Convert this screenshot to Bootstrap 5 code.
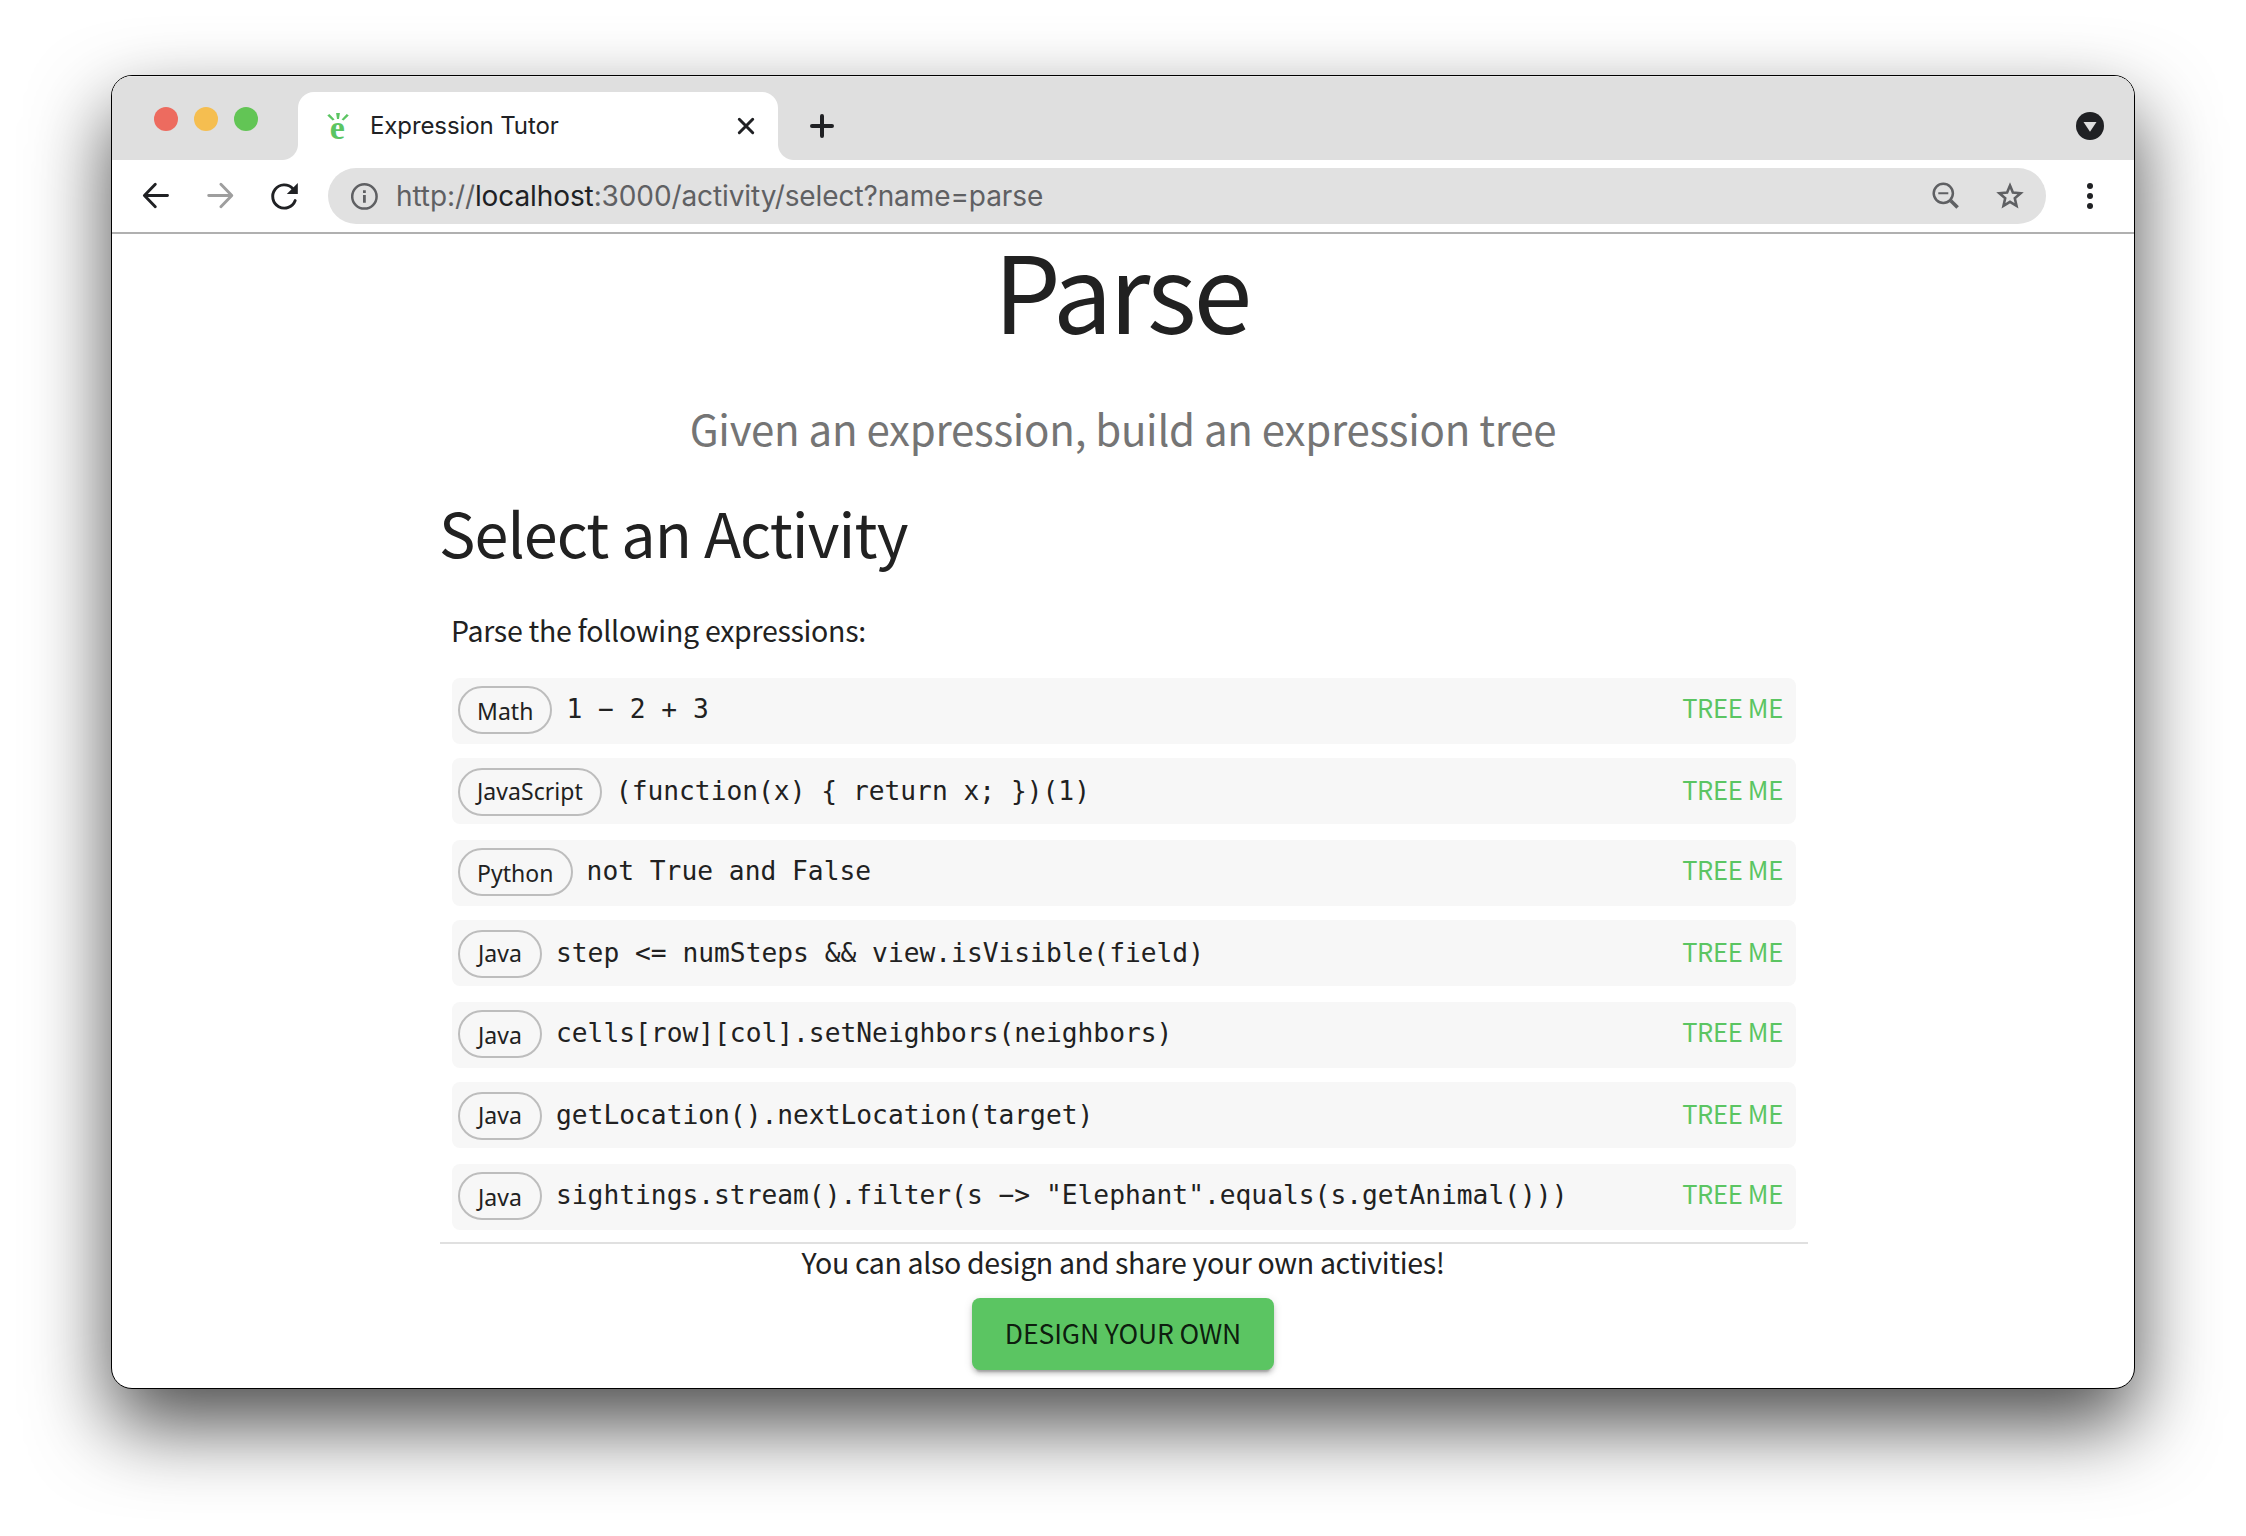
<!DOCTYPE html>
<html lang="en">
<head>
<meta charset="utf-8">
<meta name="viewport" content="width=device-width, initial-scale=1">
<title>Expression Tutor</title>
<link href="https://cdn.jsdelivr.net/npm/bootstrap@5.3.0/dist/css/bootstrap.min.css" rel="stylesheet">
<style>
  body { background: #fff; color: #212121; font-family: "Noto Sans CJK SC", "Noto Sans", sans-serif; height: 1536px; padding: 75px 0 0 111px; }
  .window { width: 2024px; height: 1314px; border: 1px solid #000; border-radius: 21px; background: #fff; box-shadow: 0 36px 80px rgba(0,0,0,.7); }
  .chrome { font-family: Inter, Roboto, sans-serif; color: #202124; }
  .chrome svg, .tab svg { display: block; flex: none; }

  /* tab strip */
  .tabstrip { height: 84px; background: #dfdfdf; padding-left: 42px; padding-right: 30px; box-shadow: inset 0 1px 0 #e9e9e9; }
  .lights { gap: 16px; width: 144px; padding-top: 31px; }
  .light { width: 24px; height: 24px; border-radius: 50%; }
  .light-close { background: #ed6b5f; }
  .light-min { background: #f5be50; }
  .light-max { background: #62c555; }
  .tab { width: 480px; height: 68px; margin-top: 16px; background: #fff; border-radius: 16px 16px 0 0; position: relative; padding: 0 22px 0 28px; }
  .tab::before, .tab::after { content: ""; position: absolute; bottom: 0; width: 16px; height: 16px; }
  .tab::before { left: -16px; background: radial-gradient(circle at 0 0, transparent 15.5px, #fff 16.5px); }
  .tab::after { right: -16px; background: radial-gradient(circle at 100% 0, transparent 15.5px, #fff 16.5px); }
  .tab-title { font-size: 24px; line-height: 32px; letter-spacing: -.1px; margin-left: 15px; }
  .favicon-e { font: bold 34px "Liberation Serif", serif; fill: #5bc562; }
  .newtab { margin: 16px 0 0 30px; height: 68px; }
  .tabsearch { margin-top: 16px; height: 68px; }

  /* toolbar */
  .toolbar { height: 74px; border-bottom: 2px solid #b0b0b0; padding-left: 28px; padding-right: 28px; }
  .navicons { gap: 32px; width: 188px; }
  .omnibox { width: 1718px; height: 56px; border-radius: 28px; background: #e1e1e1; padding: 0 20px; }
  .omnibox-actions { gap: 32px; }
  .url { font-size: 28px; line-height: 40px; letter-spacing: -.1px; color: #5f6063; margin-left: 16px; }
  .url b { font-weight: 400; color: #202124; }

  /* page */
  .page { padding: 0 326px 0 328px; }
  .page-title { font-size: 106px; line-height: 108px; letter-spacing: -3px; font-weight: 400; margin: 0; padding-right: 5px; }
  .page-sub { font-size: 42px; line-height: 60px; letter-spacing: -.27px; color: #757575; margin: 56px 0 0; padding-right: 2px; }
  .section-title { font-size: 61px; line-height: 80px; letter-spacing: -.87px; font-weight: 400; margin: 34px 0 0 -1px; }
  .prompt { font-size: 28.5px; line-height: 40px; letter-spacing: -.28px; margin: 38px 0 0 11px; }
  .activities { margin: 28px 12px 12px; }
  .activity { height: 66px; background: #f7f7f7; border-radius: 8px; padding: 0 13px 0 6px; margin-top: 16px; }
  .activity:nth-child(even) { margin-top: 14px; }
  .activity:first-child { margin-top: 0; }
  .activity:nth-child(odd) { padding-bottom: 4px; }
  .activity:nth-child(even) .lang { padding: 0 17px 2px; }
  .lang { height: 48px; min-width: 84px; border: 2px solid #bdbdbd; padding: 2px 17px 0; margin: 2px 14px 0 0; font: 23px/30px "Noto Sans", sans-serif; letter-spacing: .05px; }
  .expr { font: 26.25px/36px "DejaVu Sans Mono", monospace; color: #212121; white-space: pre; }
  .treeme { font-size: 25.5px; line-height: 36px; letter-spacing: -.3px; color: #5bc562; text-decoration: none; margin-bottom: 4px; }
  .page-footer { border-top: 2px solid #e0e0e0; }
  .invite { font-size: 28.5px; line-height: 36px; letter-spacing: -.35px; margin: 0 0 18px; padding-right: 2px; }
  .design { width: 302px; height: 72px; margin-right: 2px; border: 0; border-radius: 8px; background: #5bc562; color: rgba(0,0,0,.87); font-size: 26.5px; line-height: 36px; letter-spacing: -.1px; padding: 0 0 2px; box-shadow: 0 6px 2px -4px rgba(0,0,0,.2), 0 4px 4px rgba(0,0,0,.14), 0 2px 10px rgba(0,0,0,.12); }
</style>
</head>
<body>
<div class="window overflow-hidden">
  <header class="chrome">
    <div class="tabstrip d-flex align-items-start">
      <div class="lights d-flex">
        <span class="light light-close"></span><span class="light light-min"></span><span class="light light-max"></span>
      </div>
      <div class="tab d-flex align-items-center">
        <svg width="29" height="50" viewBox="0 -8 29 50">
          <text class="favicon-e" x="3.8" y="29.5">e</text>
          <path d="M1.3 6.4 3.4 4.9 8.6 10.4 6.6 11.6ZM10.1 4h3.8L13 10h-2ZM22.8 6.4 20.7 4.9 15.6 10.4 17.5 11.6Z" fill="#5bc562"/>
        </svg>
        <span class="tab-title">Expression Tutor</span>
        <svg class="ms-auto" width="20" height="20" viewBox="0 0 20 20"><path d="M3.3 3.3 16.7 16.7M16.7 3.3 3.3 16.7" stroke="#202124" stroke-width="3" stroke-linecap="round"/></svg>
      </div>
      <div class="newtab d-flex align-items-center">
        <svg width="28" height="28" viewBox="0 0 28 28"><path d="M14 4V24M4 14H24" stroke="#202124" stroke-width="4" stroke-linecap="round"/></svg>
      </div>
      <div class="tabsearch d-flex align-items-center ms-auto">
        <svg width="28" height="28" viewBox="0 0 28 28"><circle cx="14" cy="14" r="14" fill="#202124"/><path d="M7.5 10H20.5L14 19.8Z" fill="#dfdfdf"/></svg>
      </div>
    </div>
    <div class="toolbar d-flex align-items-center">
      <div class="navicons d-flex">
        <svg width="32" height="32" viewBox="0 0 32 32" fill="none" stroke="#202124" stroke-width="2.9" stroke-linecap="round" stroke-linejoin="round"><path d="M27.5 15.5H5M15.3 4.3 4.4 15.5 15.3 26.7"/></svg>
        <svg width="32" height="32" viewBox="0 0 32 32" fill="none" stroke="#9e9e9e" stroke-width="2.9" stroke-linecap="round" stroke-linejoin="round"><path d="M4.7 15.5H27.2M16.9 4.3 27.8 15.5 16.9 26.7"/></svg>
        <svg width="32" height="32" viewBox="0 0 32 32"><path d="M27.2 20.5A11.6 11.6 0 1 1 24.7 8.5" fill="none" stroke="#202124" stroke-width="2.9" stroke-linecap="round"/><path d="M29.8 3V14H18.8Z" fill="#202124"/></svg>
      </div>
      <div class="omnibox d-flex align-items-center">
        <svg width="32" height="32" viewBox="0 0 32 32"><circle cx="16.4" cy="16.4" r="12.2" fill="none" stroke="#5f6063" stroke-width="2.5"/><path d="M15 15H17.8V22.8H15ZM15 10.2H17.8V13H15Z" fill="#5f6063"/></svg>
        <span class="url">http://<b>localhost</b>:3000/activity/select?name=parse</span>
        <div class="omnibox-actions d-flex ms-auto">
          <svg width="32" height="32" viewBox="0 0 32 32" fill="none" stroke="#5f6063"><g transform="translate(13.3 13.3)"><circle r="9.6" stroke-width="2.5"/><path d="M-5 0H5" stroke-width="2"/><path d="M7.5 7.5 14.3 14.3" stroke-width="3.6"/></g></svg>
          <svg width="32" height="32" viewBox="0 0 32 32" fill="none" stroke="#5f6063" stroke-width="2.6"><path d="M16 5.6 18.9 12.6 26.6 13.3 20.8 18.3 22.5 25.8 16 21.8 9.5 25.8 11.2 18.3 5.4 13.3 13.1 12.6Z"/></svg>
        </div>
      </div>
      <svg class="ms-auto" width="32" height="32" viewBox="0 0 32 32" fill="#202124"><circle cx="16" cy="6" r="3"/><circle cx="16" cy="16" r="3"/><circle cx="16" cy="26" r="3"/></svg>
    </div>
  </header>

  <main class="page">
    <h1 class="page-title text-center">Parse</h1>
    <p class="page-sub text-center">Given an expression, build an expression tree</p>
    <h2 class="section-title">Select an Activity</h2>
    <p class="prompt">Parse the following expressions:</p>
    <div class="activities">
      <div class="activity d-flex align-items-center"><span class="lang rounded-pill d-flex align-items-center justify-content-center">Math</span><code class="expr">1 − 2 + 3</code><a class="treeme ms-auto">TREE ME</a></div>
      <div class="activity d-flex align-items-center"><span class="lang rounded-pill d-flex align-items-center justify-content-center">JavaScript</span><code class="expr">(function(x) { return x; })(1)</code><a class="treeme ms-auto">TREE ME</a></div>
      <div class="activity d-flex align-items-center"><span class="lang rounded-pill d-flex align-items-center justify-content-center">Python</span><code class="expr">not True and False</code><a class="treeme ms-auto">TREE ME</a></div>
      <div class="activity d-flex align-items-center"><span class="lang rounded-pill d-flex align-items-center justify-content-center">Java</span><code class="expr">step &lt;= numSteps &amp;&amp; view.isVisible(field)</code><a class="treeme ms-auto">TREE ME</a></div>
      <div class="activity d-flex align-items-center"><span class="lang rounded-pill d-flex align-items-center justify-content-center">Java</span><code class="expr">cells[row][col].setNeighbors(neighbors)</code><a class="treeme ms-auto">TREE ME</a></div>
      <div class="activity d-flex align-items-center"><span class="lang rounded-pill d-flex align-items-center justify-content-center">Java</span><code class="expr">getLocation().nextLocation(target)</code><a class="treeme ms-auto">TREE ME</a></div>
      <div class="activity d-flex align-items-center"><span class="lang rounded-pill d-flex align-items-center justify-content-center">Java</span><code class="expr">sightings.stream().filter(s −&gt; "Elephant".equals(s.getAnimal()))</code><a class="treeme ms-auto">TREE ME</a></div>
    </div>
    <footer class="page-footer text-center">
      <p class="invite">You can also design and share your own activities!</p>
      <button class="btn design" type="button">DESIGN YOUR OWN</button>
    </footer>
  </main>
</div>
<script src="https://cdn.jsdelivr.net/npm/bootstrap@5.3.0/dist/js/bootstrap.bundle.min.js"></script>
</body>
</html>
